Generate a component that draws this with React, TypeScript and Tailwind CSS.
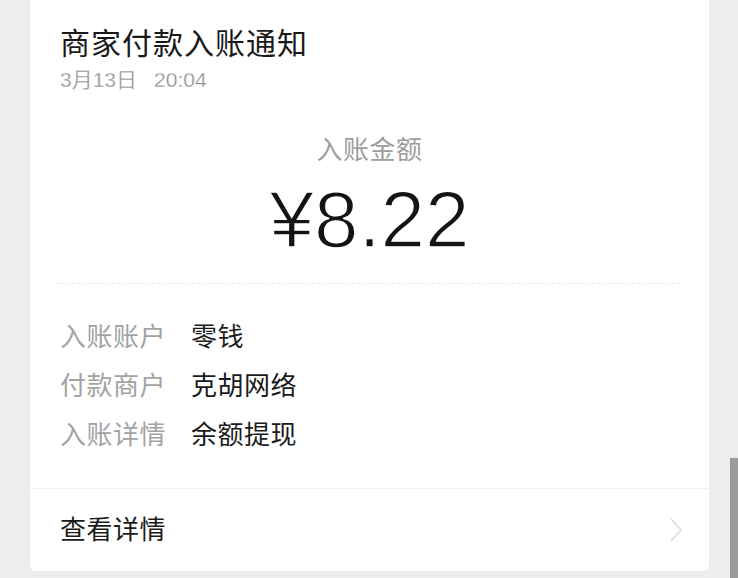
const font = { fontFamily: '"Liberation Sans", "Noto Sans CJK SC", sans-serif' };

function Row({ label, value }: { label: string; value: string }) {
  return (
    <div className="flex items-center h-[49px] text-[26px] leading-[32px] tracking-[0.5px]">
      <span className="w-[131px] shrink-0 text-[#a3a3a3]">{label}</span>
      <span className="text-[#1b1b1b]">{value}</span>
    </div>
  );
}

export default function App() {
  return (
    <div
      className="relative h-[578px] w-[738px] overflow-hidden bg-[#ededed] pl-[30px]"
      style={font}
    >
      <div className="w-[679px] bg-white rounded-b-[6px]">
        <div className="px-[30px] pt-[26px]">
          <h1 className="text-[30px] leading-[36px] tracking-[1px] text-[#191919] font-normal">
            商家付款入账通知
          </h1>
          <p className="mt-[4px] text-[21px] leading-[28px] text-[#8e8e8e] [-webkit-text-stroke:0.3px_#fff]">
            3月13日<span className="ml-[17px]">20:04</span>
          </p>
        </div>

        <div className="flex flex-col items-center">
          <p className="mt-[40px] text-[26px] leading-[32px] tracking-[0.5px] text-[#9d9d9d]">
            入账金额
          </p>
          <p className="mt-[14px] text-[80px] leading-[80px] text-[#141414] [-webkit-text-stroke:1.6px_#fff]">
            ¥8.22
          </p>
        </div>

        <div className="mt-[23px] ml-[27px] mr-[29px] border-t border-dashed border-[#e9e9e9]" />

        <div className="mt-[28px] px-[30px]">
          <Row label="入账账户" value="零钱" />
          <Row label="付款商户" value="克胡网络" />
          <Row label="入账详情" value="余额提现" />
        </div>

        <div className="mt-[29px] border-t border-[#f0f0f0]" />

        <div className="flex items-center justify-between h-[82px] pl-[30px] pr-[26px]">
          <span className="text-[26px] leading-[32px] tracking-[0.5px] text-[#1b1b1b]">查看详情</span>
          <svg width="14" height="26" viewBox="0 0 14 26" fill="none">
            <path d="M2 2 L12 13 L2 24" stroke="#d8d8d8" strokeWidth="1.4" />
          </svg>
        </div>
      </div>

      <div className="absolute right-0 top-[458px] h-[120px] w-[8px] bg-[#9c9c9c]" />
    </div>
  );
}
